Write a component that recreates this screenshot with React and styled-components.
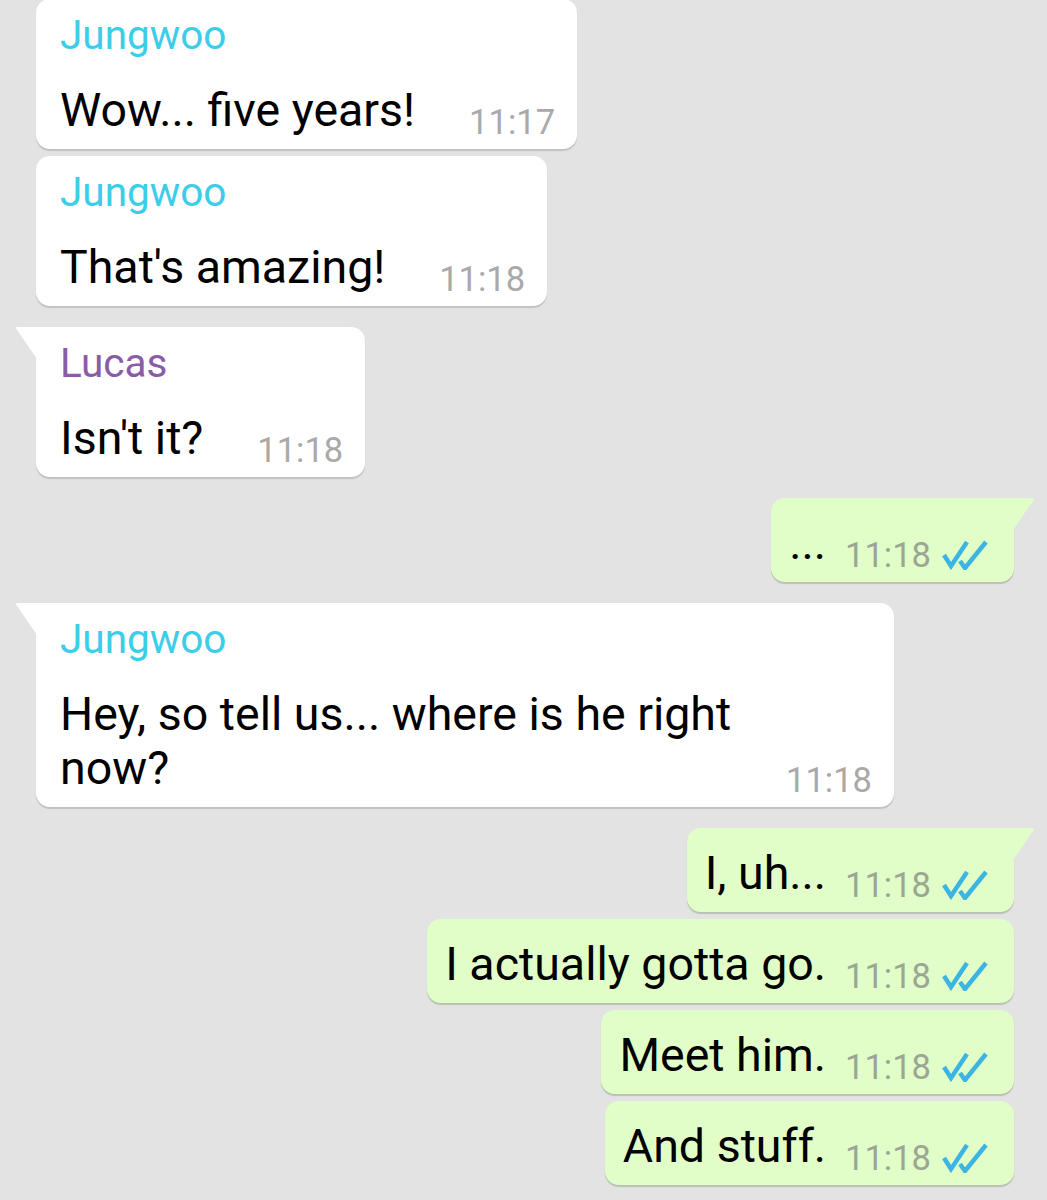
import styled, { createGlobalStyle } from "styled-components";

const GlobalStyle = createGlobalStyle`
  body {
    margin: 0;
    background: #e3e3e3;
    font-family: Roboto, "Noto Sans", Arial, sans-serif;
  }
`;

const Chat = styled.div`
  display: flex;
  flex-direction: column;
  box-sizing: border-box;
  min-height: 1200px;
  padding: 0 33px 14px 36px;
  overflow: hidden;
`;

const Bubble = styled.div`
  position: relative;
  box-sizing: border-box;
  align-self: ${({ $out }) => ($out ? "flex-end" : "flex-start")};
  max-width: 858px;
  margin-top: ${({ $first, $tail }) => ($first ? "-1px" : $tail ? "21px" : "7px")};
  padding: ${({ $out, $name }) =>
    $out ? "18px 26px 12px 18px" : `${$name ? 12 : 18}px 22px 12px 24px`};
  background: ${({ $out }) => ($out ? "#e2fec8" : "#ffffff")};
  border-radius: 14px;
  box-shadow: ${({ $out }) =>
    $out ? "0 2px 1px rgba(110, 130, 90, 0.35)" : "0 2px 1px rgba(0, 0, 0, 0.15)"};

  ${({ $tail, $out }) =>
    $tail &&
    `
    border-top-${$out ? "right" : "left"}-radius: 0;
    &::before {
      content: "";
      position: absolute;
      top: 0;
      ${$out ? "right" : "left"}: -21px;
      width: 22px;
      height: 32px;
      background: ${$out ? "#e2fec8" : "#ffffff"};
      border-top-${$out ? "right" : "left"}-radius: 3px;
      clip-path: ${
        $out
          ? "polygon(0 0, 100% 0, 0 100%)"
          : "polygon(0 0, 100% 0, 100% 100%)"
      };
    }
  `}
`;

const Name = styled.div`
  font-size: 40.5px;
  line-height: 48px;
  color: ${({ $color }) => $color};
  margin-bottom: 24px;
`;

const Body = styled.div`
  display: flex;
  align-items: flex-end;
  gap: ${({ $out }) => ($out ? "19px" : "54px")};
`;

const Text = styled.div`
  font-size: 46.5px;
  line-height: 54px;
  color: #000;
`;

const Meta = styled.div`
  flex-shrink: 0;
  display: flex;
  align-items: center;
  gap: 11px;
  margin-bottom: -5px;
`;

const Time = styled.span`
  font-size: 34.5px;
  line-height: 40px;
  color: ${({ $out }) => ($out ? "#9ba693" : "#a9a9a9")};
`;

function Ticks() {
  return (
    <svg width="46" height="30" viewBox="0 0 46 30" fill="none">
      <path d="M2 15 L9 26 L25 2" stroke="#3db5e3" strokeWidth="4.5" />
      <path d="M18 21 L23 28 L44 2" stroke="#3db5e3" strokeWidth="4.5" />
    </svg>
  );
}

const names = {
  Jungwoo: "#3ccde8",
  Lucas: "#8a5ca8",
};

const messages = [
  { from: "Jungwoo", text: "Wow... five years!", time: "11:17" },
  { from: "Jungwoo", text: "That's amazing!", time: "11:18" },
  { from: "Lucas", text: "Isn't it?", time: "11:18", tail: true },
  { out: true, text: "...", time: "11:18", tail: true },
  {
    from: "Jungwoo",
    text: "Hey, so tell us... where is he right now?",
    time: "11:18",
    tail: true,
  },
  { out: true, text: "I, uh...", time: "11:18", tail: true },
  { out: true, text: "I actually gotta go.", time: "11:18" },
  { out: true, text: "Meet him.", time: "11:18" },
  { out: true, text: "And stuff.", time: "11:18" },
];

export default function App() {
  return (
    <>
      <GlobalStyle />
      <Chat>
        {messages.map((m, i) => (
          <Bubble
            key={i}
            $first={i === 0}
            $out={m.out}
            $tail={m.tail}
            $name={!!m.from}
          >
            {m.from && <Name $color={names[m.from]}>{m.from}</Name>}
            <Body $out={m.out}>
              <Text>{m.text}</Text>
              <Meta>
                <Time $out={m.out}>{m.time}</Time>
                {m.out && <Ticks />}
              </Meta>
            </Body>
          </Bubble>
        ))}
      </Chat>
    </>
  );
}
